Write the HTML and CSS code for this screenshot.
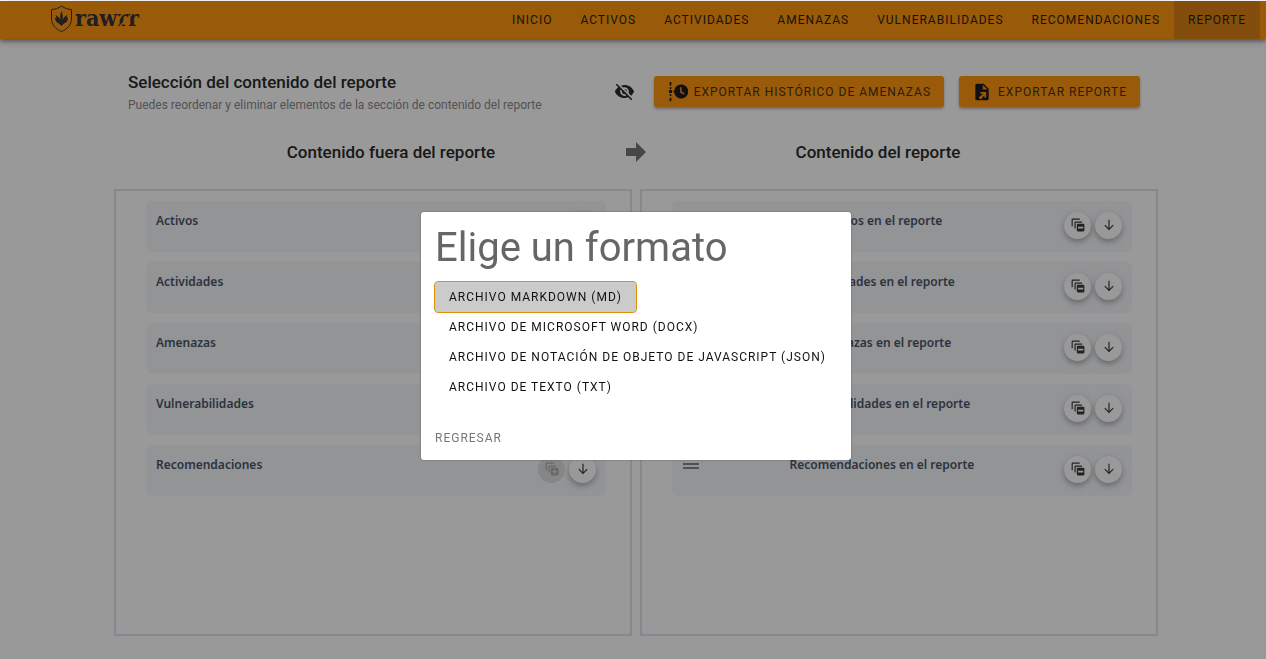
FILE: index.html
```html
<!DOCTYPE html>
<html lang="es">
<head>
<meta charset="utf-8">
<meta name="viewport" content="width=device-width, initial-scale=1">
<title>Reporte</title>
<link rel="stylesheet" href="styles.css">
</head>
<body>
<svg class="sprite" aria-hidden="true">
  <symbol id="down" viewBox="0 0 24 24"><path d="M11 3h2v14l5.500-5.500 1.420 1.420L12 20.840l-7.920-7.920L5.500 11.500 11 17z"/></symbol>
  <symbol id="remove" viewBox="0 0 24 24"><path d="M1 14V3a2 2 0 0 1 2-2h12v2H3v11zM6 18V8a2 2 0 0 1 2-2h11v2H8v10z"/><path fill-rule="evenodd" d="M12 10h9a2 2 0 0 1 2 2v9a2 2 0 0 1-2 2h-9a2 2 0 0 1-2-2v-9a2 2 0 0 1 2-2zm0 5v3h9v-3z"/></symbol>
  <symbol id="add" viewBox="0 0 24 24"><path d="M1 14V3a2 2 0 0 1 2-2h12v2H3v11zM6 18V8a2 2 0 0 1 2-2h11v2H8v10z"/><path fill-rule="evenodd" d="M12 10h9a2 2 0 0 1 2 2v9a2 2 0 0 1-2 2h-9a2 2 0 0 1-2-2v-9a2 2 0 0 1 2-2zm3.500 2.500v3h-3v2h3v3h2v-3h3v-2h-3v-3z"/></symbol>
  <symbol id="drag" viewBox="0 0 18 8"><path d="M1 1h16v2H1zM1 5h16v2H1z"/></symbol>
</svg>
<header class="topbar">
  <a class="logo" href="#" aria-label="rawrr">
    <svg width="100" height="30" viewBox="0 0 100 30">
      <path class="line" d="M11.500 2C8 4.500 5 5.300 1.500 5.600V14c0 7 4 11 10 13.500 6-2.500 10-6.500 10-13.500V5.600C18 5.300 15 4.500 11.500 2z"/>
      <path d="M11.500 7c1.300 3 1.600 6 1.100 9 1.200-2.500 2.300-3.800 4.900-5-.5 1.300-.7 2.200-.8 3.300l1.500-.8c-.5 3.500-2 5.500-4.200 6l-2.500 2.500L9 19.500c-2.200-.5-3.700-2.500-4.200-6l1.500.8c-.1-1.100-.3-2-.8-3.300 2.600 1.200 3.700 2.500 4.900 5-.5-3-.2-6 1.100-9z"/>
      <text x="25" y="22">rawrr</text>
      <path class="scratch" d="M64 24L74 7M70 22L82 10"/>
    </svg>
  </a>
  <nav class="nav">
    <a href="#">INICIO</a><a href="#">ACTIVOS</a><a href="#">ACTIVIDADES</a><a href="#">AMENAZAS</a><a href="#">VULNERABILIDADES</a><a href="#">RECOMENDACIONES</a><a class="active" href="#">REPORTE</a>
  </nav>
</header>
<main class="page">
  <section class="intro">
    <div class="heading">
      <h1>Selección del contenido del reporte</h1>
      <p>Puedes reordenar y eliminar elementos de la sección de contenido del reporte</p>
    </div>
    <button class="eye" aria-label="Ocultar"><svg width="21" height="21" viewBox="0 0 24 24"><path d="M12 7c2.760 0 5 2.240 5 5 0 .65-.13 1.260-.36 1.830l2.920 2.920c1.510-1.260 2.700-2.890 3.430-4.750-1.730-4.390-6-7.500-11-7.500-1.400 0-2.740.25-3.980.7l2.160 2.160C10.740 7.130 11.350 7 12 7zM2 4.270l2.280 2.280.46.460C3.080 8.300 1.780 10.020 1 12c1.730 4.390 6 7.500 11 7.500 1.550 0 3.030-.3 4.380-.84l.42.420L19.730 22 21 20.730 3.270 3zM7.530 9.800l1.550 1.550c-.05.210-.08.430-.08.650 0 1.660 1.340 3 3 3 .22 0 .44-.03.650-.08l1.550 1.550c-.67.330-1.410.530-2.200.530-2.760 0-5-2.240-5-5 0-.79.200-1.530.530-2.200zm4.310-.78l3.150 3.150.02-.16c0-1.660-1.340-3-3-3z"/></svg></button>
    <button class="export"><svg width="21" height="21" viewBox="0 0 24 24"><path fill-rule="evenodd" d="M3 1h2v4H3zm0 6h2v2H3zm0 8h2v2H3zm0 4h2v4H3zM4 10a2 2 0 1 1 0 4 2 2 0 0 1 0-4zm3 2l1.400-1.500a8 8 0 1 1 0 3zM15 7v6l4 2.500 1-1.500-3.300-2V7z"/></svg>EXPORTAR HISTÓRICO DE AMENAZAS</button>
    <button class="export"><svg width="20" height="20" viewBox="0 0 24 24"><path fill-rule="evenodd" d="M6 2h8l6 6v12a2 2 0 0 1-2 2H6a2 2 0 0 1-2-2V4c0-1.100.9-2 2-2zm7 1.500V9h5.500zM10.100 12v2.100h3.400L8 18.500 10.500 21l4.400-5V19H17v-7z"/></svg>EXPORTAR REPORTE</button>
  </section>
  <section class="columns titles">
    <h2>Contenido fuera del reporte</h2>
    <svg width="20" height="20" viewBox="0 0 20 20"><path d="M0 6h10V0l10 10-10 10v-6H0z"/></svg>
    <h2>Contenido del reporte</h2>
  </section>
  <section class="columns boards">
    <ul class="board">
      <li><h3>Activos</h3><button disabled aria-label="Agregar"><svg><use href="#add"/></svg></button><button aria-label="Bajar"><svg><use href="#down"/></svg></button></li>
      <li><h3>Actividades</h3><button disabled aria-label="Agregar"><svg><use href="#add"/></svg></button><button aria-label="Bajar"><svg><use href="#down"/></svg></button></li>
      <li><h3>Amenazas</h3><button disabled aria-label="Agregar"><svg><use href="#add"/></svg></button><button aria-label="Bajar"><svg><use href="#down"/></svg></button></li>
      <li><h3>Vulnerabilidades</h3><button disabled aria-label="Agregar"><svg><use href="#add"/></svg></button><button aria-label="Bajar"><svg><use href="#down"/></svg></button></li>
      <li><h3>Recomendaciones</h3><button disabled aria-label="Agregar"><svg><use href="#add"/></svg></button><button aria-label="Bajar"><svg><use href="#down"/></svg></button></li>
    </ul>
    <ul class="board chosen">
      <li><svg class="drag"><use href="#drag"/></svg><h3>Activos en el reporte</h3><button aria-label="Quitar"><svg><use href="#remove"/></svg></button><button aria-label="Bajar"><svg><use href="#down"/></svg></button></li>
      <li><svg class="drag"><use href="#drag"/></svg><h3>Actividades en el reporte</h3><button aria-label="Quitar"><svg><use href="#remove"/></svg></button><button aria-label="Bajar"><svg><use href="#down"/></svg></button></li>
      <li><svg class="drag"><use href="#drag"/></svg><h3>Amenazas en el reporte</h3><button aria-label="Quitar"><svg><use href="#remove"/></svg></button><button aria-label="Bajar"><svg><use href="#down"/></svg></button></li>
      <li><svg class="drag"><use href="#drag"/></svg><h3>Vulnerabilidades en el reporte</h3><button aria-label="Quitar"><svg><use href="#remove"/></svg></button><button aria-label="Bajar"><svg><use href="#down"/></svg></button></li>
      <li><svg class="drag"><use href="#drag"/></svg><h3>Recomendaciones en el reporte</h3><button aria-label="Quitar"><svg><use href="#remove"/></svg></button><button aria-label="Bajar"><svg><use href="#down"/></svg></button></li>
    </ul>
  </section>
</main>
<div class="overlay">
  <div class="dialog" role="dialog" aria-modal="true" aria-labelledby="format-title">
    <h2 id="format-title">Elige un formato</h2>
    <div class="formats">
      <button class="selected">ARCHIVO MARKDOWN (MD)</button>
      <button>ARCHIVO DE MICROSOFT WORD (DOCX)</button>
      <button>ARCHIVO DE NOTACIÓN DE OBJETO DE JAVASCRIPT (JSON)</button>
      <button>ARCHIVO DE TEXTO (TXT)</button>
    </div>
    <button class="back">REGRESAR</button>
  </div>
</div>
</body>
</html>
```

FILE: styles.css
```css
* { box-sizing: border-box; }
body { margin: 0; background: #fff; color: #2b2b2b; font-family: Roboto, sans-serif; }
h1, h2, h3, p, ul { margin: 0; padding: 0; }
button { border: 0; padding: 0; background: none; color: inherit; font: inherit; cursor: pointer; }
svg { display: block; flex: none; fill: currentColor; }
.sprite { position: absolute; width: 0; height: 0; }

.topbar { display: flex; justify-content: space-between; height: 38px; margin-top: 1px; padding: 0 6px 0 50px; background: #ff980f; box-shadow: 0 2px 4px rgba(0,0,0,.4), 0 4px 8px rgba(0,0,0,.12); }
.logo { padding-top: 3px; color: #33333b; }
.logo text { font: bold 23px "DejaVu Serif Condensed", "DejaVu Serif", serif; }
.logo .line { fill: none; stroke: currentColor; stroke-width: 1; }
.logo .scratch { fill: none; stroke: #ff980f; stroke-width: 1.5; }
.nav { display: flex; }
.nav a { display: flex; align-items: center; padding: 0 14px; color: #2b1f11; font-size: 12px; letter-spacing: 1px; text-decoration: none; }
.nav .active { background: #db8317; }

.page { padding: 32px 108px 24px 114px; }
.intro { display: flex; align-items: flex-start; padding: 0 18px 0 14px; }
.heading { flex: 1; }
h1 { font-size: 17px; line-height: 22px; font-weight: 500; }
.heading p { color: #8a8a8a; font-size: 12px; line-height: 24px; }
.eye { margin: 10px 19px 0 0; }
.export { display: flex; align-items: center; gap: 6px; height: 31px; margin-top: 5px; padding: 0 13px; border-radius: 3px; background: #ff980f; box-shadow: 0 2px 3px rgba(0,0,0,.3); color: #4c3012; font-size: 12px; letter-spacing: 1px; }
.export svg { color: #1c1c22; }
.export + .export { margin-left: 15px; }

.columns { display: grid; gap: 8px; }
.titles { grid-template-columns: 1fr 20px 1fr; align-items: center; margin-top: 23px; text-align: center; }
.titles h2 { font-size: 17px; line-height: 24px; font-weight: 500; }
.titles h2:first-child { padding-left: 50px; }
.titles h2:last-child { padding-right: 56px; }
.titles svg { color: #777; }
.boards { grid-template-columns: 1fr 1fr; margin-top: 25px; }
.board { display: flex; flex-direction: column; gap: 10px; min-height: 447px; padding: 10px 24px 10px 30px; border: 2px solid #dce5ee; list-style: none; }
.board li { display: flex; align-items: center; gap: 4px; height: 51px; padding: 0 10px 3px; border-radius: 6px; background: #f4f7fb; color: #4a5568; }
.board h3 { flex: 1; align-self: flex-start; padding-top: 10px; font: 600 12px/20px "Noto Sans", sans-serif; }
.board li button { display: grid; place-items: center; width: 27px; height: 27px; border-radius: 50%; background: #fff; box-shadow: 0 3px 5px rgba(0,0,0,.2), 0 2px 10px rgba(0,0,0,.12); color: #3b3b3b; }
.board li button svg { width: 14px; height: 14px; }
.board li button:disabled { background: #dfe0e2; box-shadow: none; color: #aaa; }
.board .drag { width: 18px; height: 8px; margin-bottom: 6px; color: #888; }
.chosen h3 { text-align: center; }

.overlay { position: fixed; inset: 1px 0 0; display: grid; place-items: center; padding: 12px 0 0 6px; background: rgba(0,0,0,.4); }
.dialog { width: 430px; max-width: 100%; padding: 10px 14px 14px; border-radius: 3px; background: #fff; box-shadow: 0 0 2px rgba(0,0,0,.4); }
.dialog h2 { color: #666; font-size: 40px; line-height: 52px; font-weight: 400; }
.formats { display: flex; flex-direction: column; align-items: flex-start; padding-top: 8px; }
.formats button { height: 30px; padding: 0 14px; border-radius: 3px; color: #111; font-size: 12px; letter-spacing: 1px; white-space: nowrap; }
.formats .selected { outline: 1px solid #dc920c; background: #cbcbcb; }
.back { margin-top: 28px; color: #777; font-size: 12px; line-height: 16px; letter-spacing: 1px; }
```
